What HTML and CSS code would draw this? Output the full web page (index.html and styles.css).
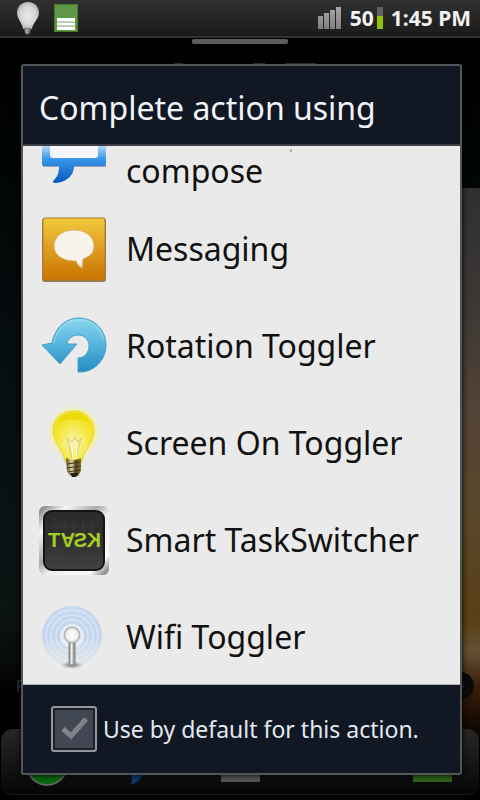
FILE: index.html
```html
<!DOCTYPE html>
<html lang="en">
<head>
<meta charset="utf-8">
<meta name="viewport" content="width=device-width, initial-scale=1">
<title>Complete action using</title>
<link rel="stylesheet" href="styles.css">
</head>
<body>
<header class="status">
  <div class="notices">
    <svg width="24" height="34" viewBox="0 0 24 34" aria-hidden="true">
      <defs><radialGradient id="dim"><stop offset="0" stop-color="#e8e8e8"/><stop offset=".7" stop-color="#d6d6d6"/><stop offset="1" stop-color="#b4b4b4"/></radialGradient></defs>
      <path d="M12 1C5 1 1 6 1 12c0 6 5 9 6 16h9c1-7 7-10 7-16C23 6 19 1 12 1z" fill="url(#dim)"/>
      <path d="M8 27h7l-1 5-3 2-2-2z" fill="#777"/><path d="M9 29h4M9 31h3" stroke="#bbb"/>
    </svg>
    <svg width="24" height="30" viewBox="0 0 24 30" aria-hidden="true">
      <path d="M0 1h24v28H0z" fill="#47792f"/><path d="M1 2h22v26H1z" fill="#5d9747"/>
      <path d="M3 15h18v12H3z" fill="#fff"/><path d="M3 19h18M3 23h18" stroke="#6f9f5c"/>
    </svg>
  </div>
  <div class="system">
    <svg width="24" height="24" viewBox="0 0 24 24" aria-hidden="true">
      <defs><linearGradient id="bars" x2="0" y2="1"><stop stop-color="#a5a5a5"/><stop offset="1" stop-color="#808080"/></linearGradient></defs>
      <path d="M0 10h5v13H0zM6 7h5v16H6zM12 4h5v19h-5zM18 1h5v22h-5z" fill="url(#bars)"/>
    </svg>
    <span class="charge">50</span>
    <svg width="6" height="24" viewBox="0 0 6 24" aria-hidden="true"><path d="M0 1h6v10H0z" fill="#606060"/><path d="M0 10h6v13H0z" fill="#8fc300"/></svg>
    <time class="clock">1:45 PM</time>
  </div>
</header>
<main class="home">
  <div class="handle"></div>
  <svg class="hint" width="144" height="4" viewBox="0 0 144 4" aria-hidden="true"><path d="M1 2h9M80 2h12M112 2h31" stroke="#4c4c4c" stroke-width="2"/></svg>
  <div class="sky"></div>
  <div class="behind">F</div>
  <div class="arrow"><svg width="28" height="32" viewBox="0 0 28 32"><circle cx="8" cy="16" r="14" fill="#0b0a08"/><path d="M6 11l5 5-5 5" fill="none" stroke="#292723" stroke-width="3"/></svg></div>
  <div class="dock" aria-hidden="true">
    <svg viewBox="0 0 60 60"><circle cx="28" cy="33" r="20" fill="#0b6610" stroke="#5c665b" stroke-width="2"/></svg>
    <svg viewBox="0 0 60 60"><path d="M14 40h16c-2 6-6 11-14 13 3-4 3-8-2-13z" fill="#0c386b"/></svg>
    <svg viewBox="0 0 60 60"><path d="M11 30h39v20H11z" fill="#555"/></svg>
    <svg viewBox="0 0 60 60"></svg>
    <svg viewBox="0 0 60 60"><path d="M12 30h39v20H12z" fill="#2f6415"/></svg>
  </div>
  <form class="dialog" role="dialog" aria-labelledby="title">
    <h1 class="title" id="title">Complete action using</h1>
    <ul class="list">
      <li class="item partial"><button type="button" class="row">
        <svg class="icon" width="72" height="52" viewBox="0 0 72 52" aria-hidden="true">
          <defs><linearGradient id="chat" x2="0" y2="1"><stop stop-color="#b3d9f5"/><stop offset=".35" stop-color="#3996e9"/><stop offset="1" stop-color="#0758bd"/></linearGradient></defs>
          <path d="M5 20h63v2H5z" fill="#9aa4b0"/>
          <path d="M4 1h64v18q0 2-2 2H36c0 8-6 16-18 17q-5 0-2-3c4-4 5-8 5-14H6q-2 0-2-2z" fill="url(#chat)"/>
          <path d="M12 0h48v10q0 3-3 3H15q-3 0-3-3z" fill="#f5f6f7"/>
        </svg>
        <span class="name">compose</span></button></li>
      <li class="item"><button type="button" class="row">
        <svg class="icon" width="72" height="72" viewBox="0 0 72 72" aria-hidden="true">
          <defs><linearGradient id="gold" x2="0" y2="1"><stop stop-color="#f1cc3d"/><stop offset=".45" stop-color="#e0a024"/><stop offset="1" stop-color="#ca7500"/></linearGradient></defs>
          <rect x="4" y="5" width="64" height="64" rx="3" fill="#8d7a58"/>
          <rect x="5" y="5" width="62" height="62" rx="2" fill="url(#gold)" stroke="#b07f23"/>
          <path d="M36 17c12 0 20 7 20 16 0 6-3 10-11 13l-1 9c-3-2-5-4-6-7-14 0-22-6-22-15 0-9 8-16 20-16z" fill="#f7f4ec" stroke="#d9b56a"/>
        </svg>
        <span class="name">Messaging</span></button></li>
      <li class="item"><button type="button" class="row">
        <svg class="icon" width="72" height="72" viewBox="0 0 72 72" aria-hidden="true">
          <defs><linearGradient id="turn" x2="0" y2="1"><stop stop-color="#8bd6ed"/><stop offset=".5" stop-color="#53b4dc"/><stop offset="1" stop-color="#238cc3"/></linearGradient></defs>
          <path d="M40 62V48c6 0 11-5 11-12 0-7-5-11-11-11-6 0-10 4-11 9h10L22 54 4 35l10-2C17 18 27 8 41 8c15 0 27 12 27 27S56 63 40 62z" fill="url(#turn)" stroke="#4ca0c8"/>
          <path d="M16 33C19 18 29 10 41 10c12 0 22 8 24 19" fill="none" stroke="#a9e3f3" opacity=".8"/>
        </svg>
        <span class="name">Rotation Toggler</span></button></li>
      <li class="item"><button type="button" class="row">
        <svg class="icon" width="72" height="72" viewBox="0 0 72 72" aria-hidden="true">
          <defs>
            <radialGradient id="halo"><stop offset=".7" stop-color="#fff352" stop-opacity=".7"/><stop offset="1" stop-color="#fff68a" stop-opacity="0"/></radialGradient>
            <radialGradient id="bulb" cy=".62"><stop stop-color="#fbf6b7"/><stop offset=".5" stop-color="#f6ec64"/><stop offset="1" stop-color="#f3e324"/></radialGradient>
            <linearGradient id="cap"><stop stop-color="#54451b"/><stop offset=".4" stop-color="#e0d8ae"/><stop offset=".65" stop-color="#4e4017"/><stop offset="1" stop-color="#8d7a31"/></linearGradient>
          </defs>
          <circle cx="36" cy="25" r="27" fill="url(#halo)"/>
          <path d="M36 4c-12 0-21 8-21 19 0 13 10 19 12 32h17c2-13 12-19 12-32C56 12 47 4 36 4z" fill="url(#bulb)" stroke="#e8d83c"/>
          <path d="M20 16c3-7 9-10 16-10s13 3 16 10c-10-5-22-5-32 0z" fill="#e6d500" opacity=".65"/>
          <path d="M34 51l-5-20 5 4 3-5 3 5 3-4-5 20" fill="none" stroke="#d3c686"/>
          <path d="M34 39l1 12h3l1-12" fill="none" stroke="#fff"/>
          <path d="M28 51q8 4 15 0v13l-3 5h-8l-3-5z" fill="url(#cap)"/>
          <path d="M29 57l14-2M29 61l14-2M30 65l12-2" stroke="#3f3510"/><path d="M32 66h8l-2 4h-4z" fill="#251f0d"/>
        </svg>
        <span class="name">Screen On Toggler</span></button></li>
      <li class="item"><button type="button" class="row">
        <svg class="icon" width="72" height="72" viewBox="0 0 72 72" aria-hidden="true">
          <defs>
            <linearGradient id="steel" x2="1" y2="1"><stop stop-color="#777"/><stop offset=".2" stop-color="#f6f6f6"/><stop offset=".42" stop-color="#aaa"/><stop offset=".55" stop-color="#eee"/><stop offset=".85" stop-color="#fafafa"/><stop offset="1" stop-color="#666"/></linearGradient>
            <linearGradient id="face" x2="0" y2="1"><stop stop-color="#2b2b2b"/><stop offset=".5" stop-color="#303030"/><stop offset="1" stop-color="#414141"/></linearGradient>
          </defs>
          <rect x="1" y="2" width="70" height="69" rx="6" fill="url(#steel)"/>
          <rect x="6" y="7" width="60" height="59" rx="8" fill="url(#face)" stroke="#151515" stroke-width="2"/>
          <path d="M18 14v46M27 14v46M36 14v46M45 14v46M54 14v46M12 22h48M12 49h48" stroke="#383838"/>
          <g class="logo">
            <text x="10" y="43">T</text>
            <text transform="translate(37 29) rotate(180)">A</text>
            <text transform="translate(49 43) scale(-1 1)">S</text>
            <text transform="translate(63 43) scale(-1 1)">K</text>
          </g>
        </svg>
        <span class="name">Smart TaskSwitcher</span></button></li>
      <li class="item"><button type="button" class="row">
        <svg class="icon" width="72" height="72" viewBox="0 0 72 72" aria-hidden="true">
          <defs>
            <linearGradient id="fade" x2="0" y2="1"><stop offset=".5" stop-color="#fff"/><stop offset=".92" stop-color="#000"/></linearGradient>
            <mask id="waves"><path d="M0 0h72v72H0z" fill="url(#fade)"/></mask>
            <linearGradient id="pole"><stop stop-color="#777"/><stop offset=".4" stop-color="#eee"/><stop offset="1" stop-color="#777"/></linearGradient>
            <radialGradient id="ball"><stop stop-color="#fff"/><stop offset=".7" stop-color="#eee"/><stop offset="1" stop-color="#bbb"/></radialGradient>
            <radialGradient id="shade"><stop stop-color="#444" stop-opacity=".8"/><stop offset="1" stop-color="#888" stop-opacity="0"/></radialGradient>
          </defs>
          <g mask="url(#waves)">
            <circle cx="34" cy="35" r="30" fill="#c3d7ee"/>
            <g fill="none" stroke="#d5e2f2" stroke-width="2"><circle cx="34" cy="35" r="26"/><circle cx="34" cy="35" r="21"/><circle cx="34" cy="35" r="16"/></g>
            <circle cx="34" cy="35" r="12" fill="#e7edf4"/>
          </g>
          <ellipse cx="34" cy="64" rx="12" ry="4" fill="url(#shade)"/>
          <path d="M31 38h6v26h-6z" fill="url(#pole)" stroke="#888"/>
          <circle cx="34" cy="34" r="8" fill="url(#ball)" stroke="#aaa"/>
        </svg>
        <span class="name">Wifi Toggler</span></button></li>
    </ul>
    <div class="footer">
      <input class="check" type="checkbox" id="always">
      <label class="always" for="always">Use by default for this action.</label>
      <svg class="tick" width="46" height="46" viewBox="0 0 46 46" aria-hidden="true"><path d="M12 23l8 7 15-17" fill="none" stroke="#808489" stroke-width="5"/></svg>
    </div>
  </form>
</main>
</body>
</html>
```

FILE: styles.css
```css
* { box-sizing: border-box; }

body {
  margin: 0;
  min-height: 100vh;
  display: flex;
  flex-direction: column;
  background: #000;
  color: #111;
  font-family: "Noto Sans", "Open Sans", sans-serif;
}

.status {
  display: flex;
  justify-content: space-between;
  align-items: center;
  height: 38px;
  padding: 0 9px 0 16px;
  background: linear-gradient(#303030, #1b1b1b);
  border-bottom: 2px solid #303030;
  color: #f2f2f2;
  font-size: 21px;
  font-weight: 700;
}

.notices { display: flex; align-items: center; gap: 14px; }
.system { display: flex; align-items: center; }
.charge { margin-left: 8px; margin-right: 3px; }
.clock { margin-left: 8px; }

.home {
  position: relative;
  flex: 1;
  padding: 26px 18px 24px 21px;
  background: linear-gradient(#000, #020606 20%, #071011 50%, #0b1413 75%, #080b08 82%, #000 86%);
}

.handle {
  position: absolute;
  top: 1px;
  left: 40%;
  width: 20%;
  height: 5px;
  border-radius: 2px;
  background: #5c5c5c;
}

.hint {
  position: absolute;
  top: 24px;
  right: 34%;
}

.sky {
  position: absolute;
  top: 150px;
  right: 0;
  bottom: 60px;
  width: 50%;
  background: linear-gradient(#303030, #3b3735 20%, #534336 40%, #5a4628 60%, #593f16 78%, #665033 84%, #3a200b 90%, #1a0c03 96%, #080502);
}

.behind {
  position: absolute;
  left: 16px;
  bottom: 102px;
  color: #3c3f3c;
  font-size: 16px;
  line-height: 24px;
}

.arrow { position: absolute; right: 0; bottom: 98px; height: 32px; }

.dock {
  position: absolute;
  left: 1px;
  right: 1px;
  bottom: 5px;
  height: 66px;
  display: flex;
  justify-content: space-around;
  align-items: center;
  border-radius: 12px;
  border-bottom: 1px solid #1c1c1c;
  background: linear-gradient(#282828, #050505);
}

.dock svg { width: 60px; height: 60px; }

.dialog {
  position: relative;
  margin: 0;
  border: 2px solid #55565a;
  border-radius: 3px;
  background: #111824;
  box-shadow: 0 0 6px #000;
}

.title {
  margin: 0;
  padding: 18px 16px 12px;
  border-bottom: 2px solid #3d3d47;
  color: #f0f3f8;
  font-size: 32px;
  font-weight: 400;
  line-height: 48px;
  white-space: nowrap;
}

.list {
  position: relative;
  margin: 0;
  padding: 0;
  list-style: none;
  background: #eaeaea;
}

.list::before {
  content: "";
  position: absolute;
  top: 3px;
  left: 61%;
  width: 2px;
  height: 3px;
  background: #b0b0b0;
}

.item { border-bottom: 1px solid #e5e5e5; }
.item:last-child { border-bottom-color: #b5b5b8; }

.row {
  display: flex;
  align-items: center;
  gap: 16px;
  width: 100%;
  height: 96px;
  padding: 2px 15px 0;
  border: 0;
  background: none;
  color: inherit;
  font: inherit;
  font-size: 32px;
  line-height: 40px;
  text-align: left;
  white-space: nowrap;
}

.icon { flex: none; }

.partial .row {
  height: 53px;
  padding: 0 15px 4px;
  overflow: hidden;
}

.logo {
  fill: #a4cf1f;
  font-family: "Liberation Sans", sans-serif;
  font-size: 20px;
  font-weight: 700;
}

.footer {
  position: relative;
  display: flex;
  align-items: center;
  gap: 6px;
  padding: 21px 28px;
  color: #e2e8f0;
}

.check {
  appearance: none;
  flex: none;
  width: 46px;
  height: 46px;
  margin: 0;
  border: 2px solid #93969a;
  border-radius: 3px;
  background: #414753;
  box-shadow: inset 0 0 0 2px #1c212b;
}

.always {
  font-size: 23px;
  line-height: 32px;
  white-space: nowrap;
}

.tick {
  position: absolute;
  left: 28px;
  top: 21px;
  pointer-events: none;
}
```
